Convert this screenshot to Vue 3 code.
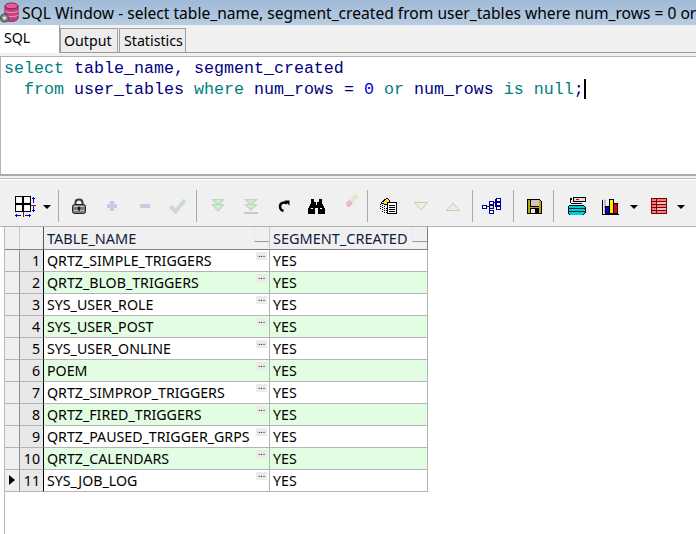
<script setup>
const rows = [
  'QRTZ_SIMPLE_TRIGGERS', 'QRTZ_BLOB_TRIGGERS', 'SYS_USER_ROLE', 'SYS_USER_POST', 'SYS_USER_ONLINE', 'POEM',
  'QRTZ_SIMPROP_TRIGGERS', 'QRTZ_FIRED_TRIGGERS', 'QRTZ_PAUSED_TRIGGER_GRPS', 'QRTZ_CALENDARS', 'SYS_JOB_LOG'
]
</script>

<template>
  <div class="win">
    <div class="title">
      <svg class="appicon" width="19" height="22" viewBox="0 0 19 22">
        <ellipse cx="11.500" cy="4" rx="6.500" ry="3" fill="#e0609a" stroke="#8a2458"/>
        <path d="M5 4V16c0 1.700 3 3.500 6.500 3.500s6.500-1.800 6.500-3.500V4c0 1.700-3 3-6.500 3S5 5.700 5 4z" fill="#c8407f" stroke="#8a2458"/>
        <path d="M5 9c1 2 12 2 13 0M5 13c1 2 12 2 13 0" fill="none" stroke="#f0a0c8"/>
        <circle cx="4.500" cy="16" r="3.800" fill="#9a9a9a" stroke="#555" stroke-width="1.500"/>
        <circle cx="4.500" cy="16" r="1.300" fill="#eee"/>
      </svg>
      <span class="title-text">SQL Window - select table_name, segment_created from user_tables where num_rows = 0 or</span>
    </div>

    <div class="tabs">
      <div class="tab active">SQL</div>
      <div class="tab t-output">Output</div>
      <div class="tab t-stats">Statistics</div>
    </div>

    <div class="gap"></div>

    <div class="editor">
      <div><span class="k">select</span> <span class="i">table_name, segment_created</span></div>
      <div class="indent"><span class="k">from</span> <span class="i">user_tables</span> <span class="k">where</span> <span class="i">num_rows =</span> <span class="n">0</span> <span class="k">or</span> <span class="i">num_rows</span> <span class="k">is</span> <span class="k">null</span><span class="i">;</span><span class="caret"></span></div>
    </div>

    <div class="splitter"></div>

    <div class="toolbar">
      <span class="slot">
        <svg width="26" height="26" viewBox="0 0 26 26" shape-rendering="crispEdges">
          <rect x="2.500" y="3.500" width="15" height="15" fill="#f0f0f0" stroke="#000"/>
          <path d="M10 3v16M2 11h16" stroke="#000" stroke-width="2"/>
          <path d="M4 5h4v4H4zM12 5h4v4h-4zM4 13h4v4H4zM12 13h4v4h-4z" fill="#fff"/>
          <path d="M18 12h5" stroke="#c00000"/>
          <path d="M10 19v5" stroke="#c00000"/>
          <path d="M20 4h1v6h-1zM19 5h3v1h-3zM20 13h1v6h-1zM19 17h3v1h-3zM2 22h6v1H2zM3 21h1v3H3zM12 22h6v1h-6zM16 21h1v3h-1z" fill="#0000d0"/>
        </svg>
      </span>
      <span class="drop"><i></i></span>
      <span class="sep m7"></span>

      <span class="slot m3">
        <svg width="14" height="16" viewBox="0 0 14 16">
          <path d="M3.500 7V4.500c0-4 7-4 7 0V7" fill="none" stroke="#3a3a3a" stroke-width="2"/>
          <rect x="0.500" y="6.500" width="13" height="9" rx="2" fill="#7c7c7c" stroke="#222"/>
          <path d="M2 8.500h10M2 12.500h10" stroke="#c4c4c4"/>
          <circle cx="7" cy="10" r="1.500" fill="#111"/>
          <rect x="6.300" y="10" width="1.400" height="3" fill="#111"/>
        </svg>
      </span>
      <span class="slot">
        <svg width="14" height="14" viewBox="0 0 14 14" shape-rendering="crispEdges"><path d="M5 2h4v3h3v4H9v3H5V9H2V5h3z" fill="#c6cbe0"/></svg>
      </span>
      <span class="slot">
        <svg width="14" height="14" viewBox="0 0 14 14" shape-rendering="crispEdges"><rect x="2" y="5" width="10" height="4" fill="#c6cbe0"/></svg>
      </span>
      <span class="slot">
        <svg width="18" height="16" viewBox="0 0 18 16"><path d="M1.500 8l5 5.500L16 2" fill="none" stroke="#cbdccb" stroke-width="4"/></svg>
      </span>
      <span class="sep m2"></span>

      <span class="slot m4">
        <svg width="14" height="14" viewBox="0 0 14 14">
          <path d="M0 0h14l-7 7z" fill="#c8d0c8"/>
          <path d="M3 1h8L7 5z" fill="#c4f4c4"/>
          <path d="M0 5h14l-7 8z" fill="#c8d0c8"/>
          <path d="M3 6h8l-4 5z" fill="#c4f4c4"/>
        </svg>
      </span>
      <span class="slot">
        <svg width="14" height="15" viewBox="0 0 14 15">
          <path d="M0 0h14l-7 7z" fill="#c8d0c8"/>
          <path d="M3 1h8L7 5z" fill="#c4f4c4"/>
          <path d="M0 5h14l-7 7z" fill="#c8d0c8"/>
          <path d="M3 6h8l-4 4z" fill="#c4f4c4"/>
          <rect x="0" y="13" width="14" height="2" fill="#c8c8c8"/>
        </svg>
      </span>
      <span class="slot">
        <svg width="14" height="14" viewBox="0 0 14 14"><path d="M10 4.500C7 2.500 3 4 3 7.500c0 2.500 2 4 3.500 4.500" fill="none" stroke="#000" stroke-width="2.400"/><path d="M7.500 1.500h5v5z" fill="#000"/></svg>
      </span>
      <span class="slot">
        <svg width="17" height="15" viewBox="0 0 17 15" shape-rendering="crispEdges">
          <path d="M3 0h3v3h2v3h1V3h2V0h3v4l3 6v5H10V9H7v6H0v-5l3-6z" fill="#000"/>
          <path d="M3 9h2v1H3zM12 9h2v1h-2z" fill="#fff"/>
        </svg>
      </span>
      <span class="slot eraser">
        <svg width="20" height="20" viewBox="0 0 20 20">
          <path d="M6 10L15 1l4 3-9 9z" fill="#e6e6e6"/>
          <path d="M12 4l3-3 4 3-3 3z" fill="#dcecc0"/>
          <path d="M6 10l3-3 4 3-3 4H7z" fill="#eeb4d0"/>
        </svg>
      </span>
      <span class="sep m1"></span>

      <span class="slot m4">
        <svg width="17" height="16" viewBox="0 0 17 16" shape-rendering="crispEdges">
          <path d="M1 5l6-5 3 3-3 4z" fill="#ffe040" stroke="#000"/>
          <path d="M0 6h1v1H0zM2 7h1v1H2zM0 8h1v1H0zM4 8h1v1H4zM2 9h1v1H2zM0 10h1v1H0zM4 10h1v1H4zM2 11h1v1H2zM6 10h1v1H6zM4 12h1v1H4zM6 12h1v1H6zM2 13h1v1H2zM4 14h1v1H4zM6 14h1v1H6z" fill="#000"/>
          <rect x="7.500" y="4.500" width="9" height="11" fill="#fff" stroke="#000"/>
          <path d="M9 7h6M9 9h6M9 11h6M9 13h6" stroke="#000"/>
        </svg>
      </span>
      <span class="slot n32">
        <svg width="14" height="9" viewBox="0 0 14 9"><path d="M0.500 0.500h13L7 8z" fill="#eef0d8" stroke="#c8c8c8"/></svg>
      </span>
      <span class="slot n32">
        <svg width="14" height="9" viewBox="0 0 14 9"><path d="M0.500 8.500h13L7 1z" fill="#eef0d8" stroke="#c8c8c8"/></svg>
      </span>
      <span class="sep m3"></span>

      <span class="slot m2">
        <svg width="20" height="16" viewBox="0 0 20 16" shape-rendering="crispEdges" fill="#fff" stroke="#000090">
          <rect x="0.500" y="7.500" width="4" height="2.500"/>
          <rect x="7.500" y="3.500" width="4" height="2.500"/>
          <rect x="7.500" y="7.500" width="4" height="2.500" fill="#ffe060"/>
          <rect x="7.500" y="12.500" width="4" height="2.500"/>
          <rect x="14.500" y="0.500" width="4" height="2.500"/>
          <rect x="14.500" y="4.500" width="4" height="2.500"/>
          <rect x="14.500" y="8.500" width="4" height="2.500"/>
          <path d="M4 8h4M7 5v9M11 4h4M13 1v8" fill="none"/>
        </svg>
      </span>
      <span class="sep m5"></span>

      <span class="slot m4">
        <svg width="15" height="15" viewBox="0 0 15 15" shape-rendering="crispEdges">
          <path d="M0.500 0.500h12l2 2v12H0.500z" fill="#b8a800" stroke="#000"/>
          <rect x="3" y="1" width="9" height="6" fill="#c8c8c8"/>
          <path d="M3.500 1v6h8.500" fill="none" stroke="#000"/>
          <rect x="3.500" y="9.500" width="8" height="5" fill="#e8e8e8" stroke="#000"/>
          <rect x="8" y="10" width="3" height="4" fill="#000"/>
        </svg>
      </span>
      <span class="sep m2"></span>

      <span class="slot m6">
        <svg width="18" height="18" viewBox="0 0 18 18" shape-rendering="crispEdges">
          <rect x="5.500" y="0.500" width="12" height="4" fill="#ddd" stroke="#000"/>
          <rect x="8" y="2" width="3" height="1" fill="#d00000"/>
          <path d="M2 6V2h2M2 1l2 1-2 1" fill="none" stroke="#000"/>
          <path d="M2 8h13l2 2v6l-2 2H2l-2-2v-6z" fill="#00d0d8" stroke="#000"/>
          <path d="M0 11h17M0 14h17" stroke="#003040"/>
          <path d="M3 6.500h11" stroke="#000"/>
        </svg>
      </span>
      <span class="slot m1">
        <svg width="17" height="17" viewBox="0 0 17 17" shape-rendering="crispEdges">
          <path d="M0.500 2v14.500h16" fill="none" stroke="#000"/>
          <path d="M2 1l2 2v12H2z" fill="#bbb"/>
          <rect x="3.500" y="8.500" width="4" height="7" fill="#0000e0" stroke="#000"/>
          <rect x="7.500" y="1.500" width="4" height="14" fill="#ffe800" stroke="#000"/>
          <rect x="11.500" y="5.500" width="3.500" height="10" fill="#e80000" stroke="#000"/>
        </svg>
      </span>
      <span class="drop m2"><i></i></span>
      <span class="slot m4">
        <svg width="16" height="16" viewBox="0 0 16 16" shape-rendering="crispEdges">
          <rect x="0.500" y="0.500" width="15" height="15" fill="#f08080" stroke="#800000"/>
          <path d="M1 3.500h14M1 6.500h14M1 9.500h14M1 12.500h14M5.500 1v14" stroke="#800000"/>
          <path d="M6 4h9v2H6zM6 10h9v2H6z" fill="#f4c0c0"/>
        </svg>
      </span>
      <span class="drop m1"><i></i></span>
    </div>

    <div class="grid">
      <div class="row head">
        <div class="c ind"></div>
        <div class="c num"></div>
        <div class="c name">TABLE_NAME<span class="sortbtn"></span></div>
        <div class="c seg">SEGMENT_CREATED<span class="sortbtn"></span></div>
      </div>
      <div v-for="(name, i) in rows" :key="name" class="row" :class="{ alt: i % 2 === 1 }">
        <div class="c ind"><span v-if="i === rows.length - 1" class="pointer"></span></div>
        <div class="c num">{{ i + 1 }}</div>
        <div class="c name">{{ name }}<span class="more">...</span></div>
        <div class="c seg">YES</div>
      </div>
    </div>
  </div>
</template>

<style>
html, body { margin: 0; background: #fff; overflow: hidden; }
</style>

<style scoped>
.win { width: 696px; height: 534px; display: flex; flex-direction: column; overflow: hidden; background: #fff; font-family: "Noto Sans", sans-serif; color: #000; }
.title { height: 25px; flex: none; display: flex; align-items: center; background: linear-gradient(#9fb9d6, #b9cde2); white-space: nowrap; overflow: hidden; }
.appicon { flex: none; margin-right: 3px; }
.title-text { font-size: 15.600px; }
.tabs { height: 27px; flex: none; display: flex; align-items: flex-end; background: #f0f0f0; border-bottom: 1px solid #999; font-size: 14.200px; position: relative; }
.tab { box-sizing: border-box; height: 24px; line-height: 24px; padding-left: 3px; background: #ececec; border: 1px solid #a0a0a0; border-bottom: none; margin-right: 1px; }
.tab.active { width: 60px; height: 28px; line-height: 26px; padding-left: 4px; background: #fff; border-top: none; border-left: none; border-right: 1px solid #a0a0a0; margin-bottom: -1px; margin-right: 0; }
.t-output { width: 58px; }
.t-stats { width: 67px; padding-left: 4px; }
.gap { height: 3px; flex: none; background: #f0f0f0; }
.editor { box-sizing: border-box; height: 120px; flex: none; border-top: 1px solid #b4b4b4; border-left: 1px solid #b4b4b4; border-bottom: 2px solid #aaa; background: #fff; padding: 1px 0 0 3px; font-family: "Liberation Mono", monospace; font-size: 16.670px; line-height: 21px; white-space: pre; }
.indent { padding-left: 20px; }
.k { color: #008080; }
.i { color: #000080; }
.n { color: #0000e0; }
.caret { display: inline-block; width: 2px; height: 20px; background: #000; vertical-align: -5px; }
.splitter { height: 4px; flex: none; background: linear-gradient(#f0f0f0 0 2px, #bbb 2px 3px, #fff 3px 4px); }
.toolbar { box-sizing: border-box; height: 47px; flex: none; display: flex; align-items: center; padding: 6px 0 0 9px; background: #f0f0f0; border-bottom: 1px solid #b0b0b0; }
.slot { width: 33px; flex: none; display: flex; justify-content: center; align-items: center; height: 30px; }
.eraser svg { margin-top: -6px; }
.n32 { width: 32px; }
.drop { width: 9px; flex: none; display: flex; justify-content: center; }
.drop i { display: block; width: 0; height: 0; border: 4px solid transparent; border-top: 4px solid #000; border-bottom: none; margin-top: 1px; }
.sep { width: 1px; height: 32px; flex: none; background: #a8a8a8; }
.m1 { margin-left: 1px; }
.m2 { margin-left: 2px; }
.m3 { margin-left: 3px; }
.m4 { margin-left: 4px; }
.m5 { margin-left: 5px; }
.m6 { margin-left: 6px; }
.m7 { margin-left: 7px; }
.grid { flex: 1; margin-left: 4px; border-left: 1px solid #b8b8b8; font-size: 14.200px; color: #000; }
.row { display: grid; grid-template-columns: 15px 24px 226px 158px; grid-template-rows: minmax(0, 1fr); height: 22px; width: 423px; background: #fff; }
.row.alt { background: #e3fde3; }
.row.head { height: 23px; background: #f0f0f0; font-size: 14.500px; }
.c { box-sizing: border-box; height: 100%; line-height: 22px; border-bottom: 1px solid #b4b4b4; border-right: 1px solid #b4b4b4; position: relative; white-space: nowrap; }
.head .c { line-height: 22px; border-bottom-color: #808080; border-right-color: #c8c8c8; color: #102040; }
.head .seg { border-right-color: #808080; }
.ind { background: #f0f0f0; border-right-color: #909090; }
.num { background: #e8e8e8; text-align: right; padding-right: 3px; border-right: 1px solid #000; }
.head .num { background: #f0f0f0; border-right-color: #555; }
.name, .seg { padding-left: 3px; }
.sortbtn { position: absolute; right: 0; top: 0; width: 14px; height: 14px; border-bottom: 1px solid #999; border-left: 1px solid #e8e8e8; background: #f0f0f0; }
.more { position: absolute; right: 2px; top: 2px; width: 11px; height: 8px; background: #ebebeb; font-size: 9px; line-height: 4px; text-align: center; color: #000; }
.pointer { position: absolute; left: 4px; top: 5px; border: 5px solid transparent; border-left: 6px solid #000; border-right: none; }
</style>
